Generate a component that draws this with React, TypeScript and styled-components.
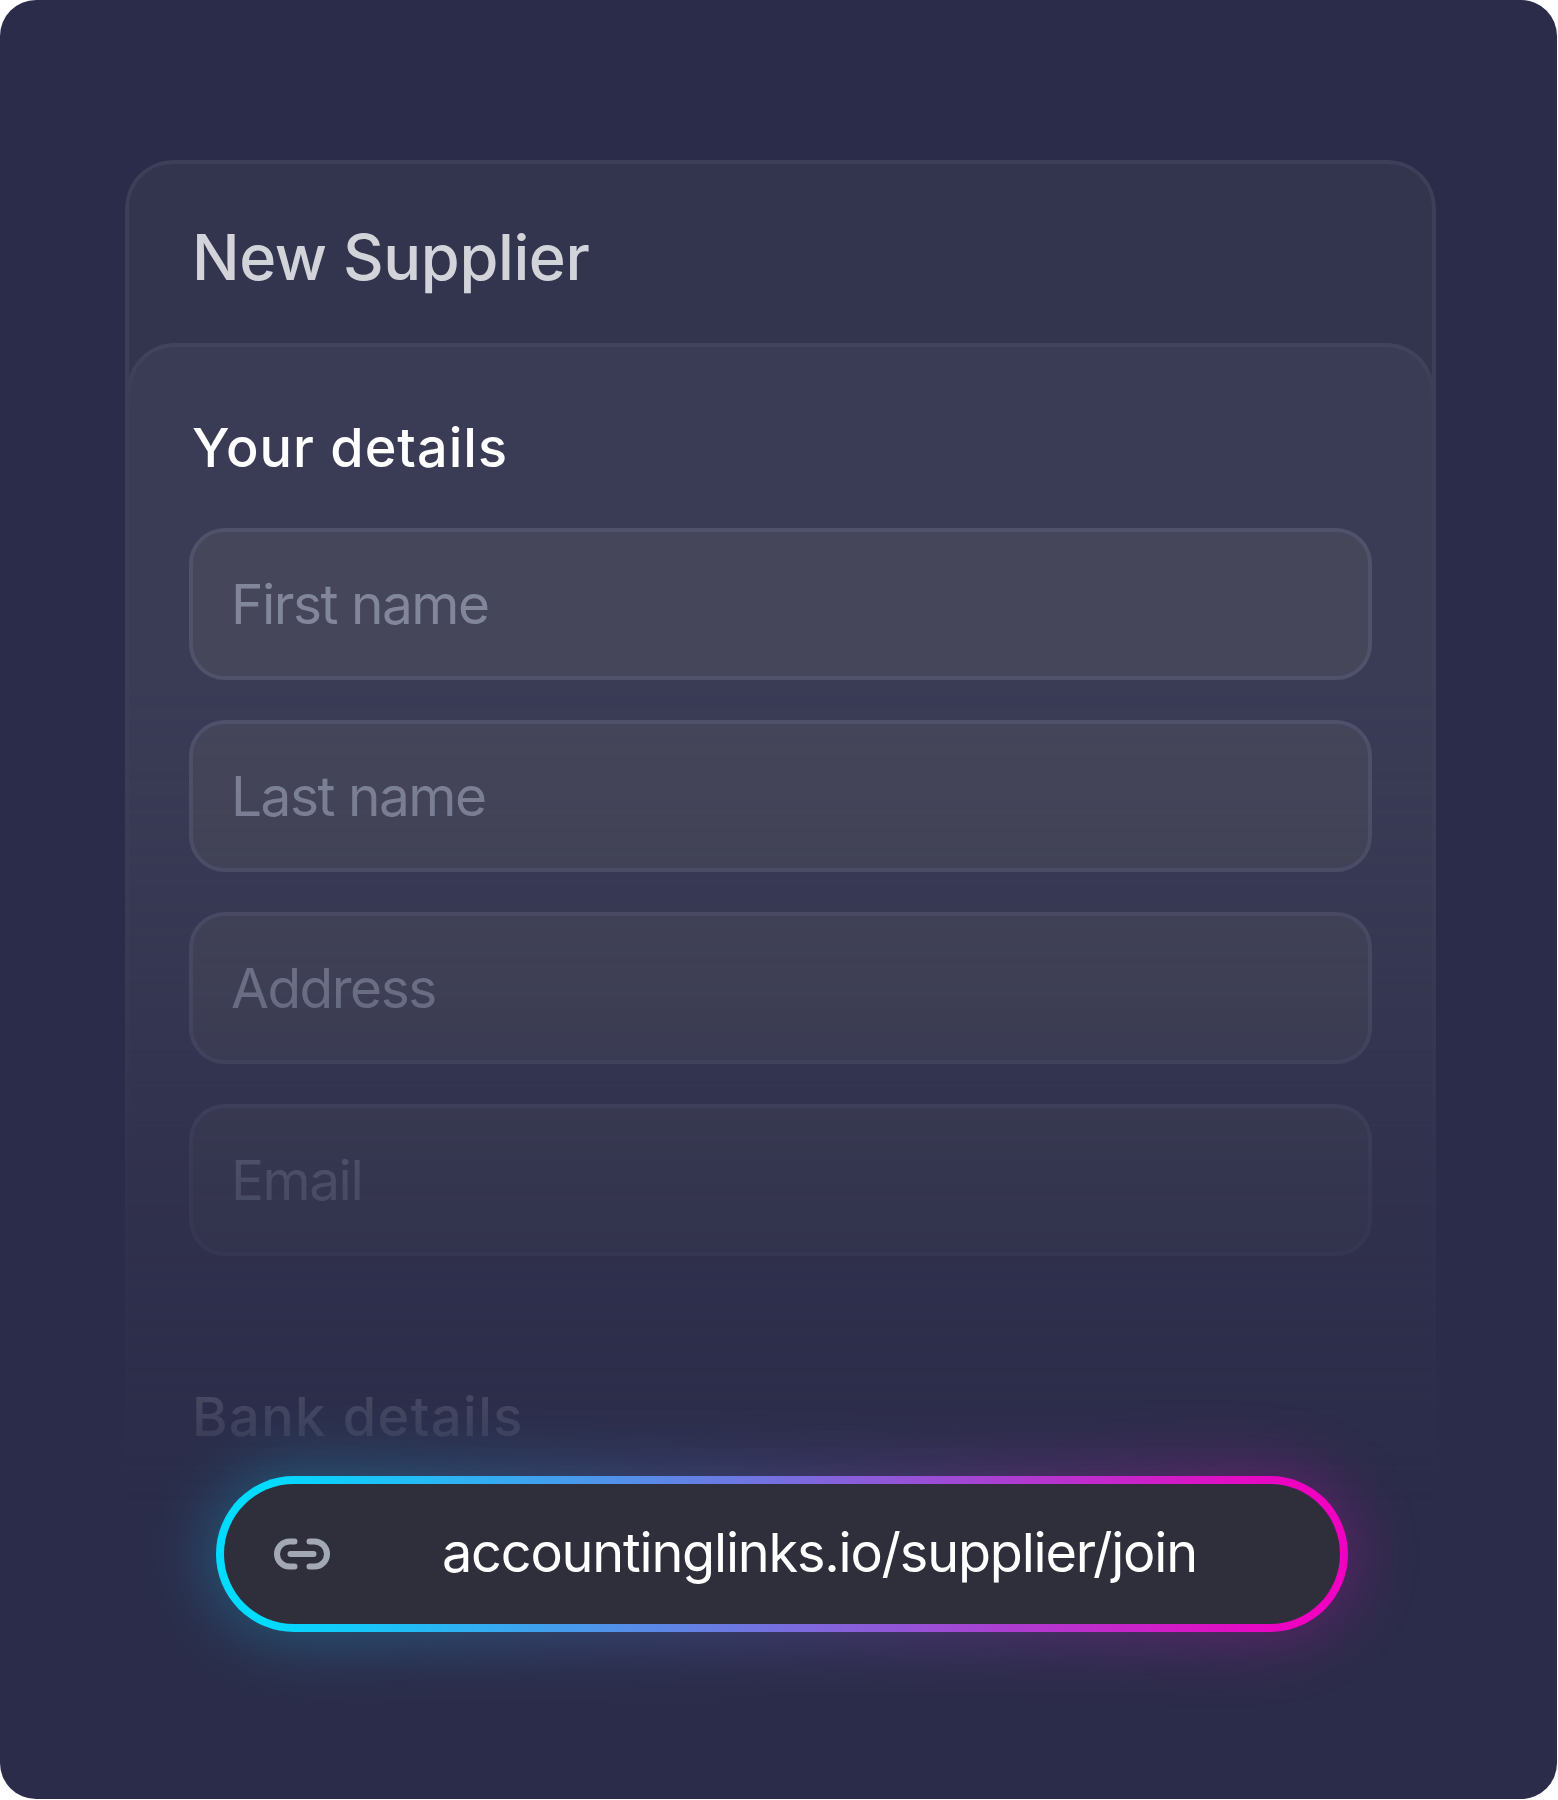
import React from "react";
import styled, { createGlobalStyle } from "styled-components";

const GlobalStyle = createGlobalStyle`
  html, body {
    margin: 0;
    padding: 0;
    background: #ffffff;
  }
  * {
    box-sizing: border-box;
  }
`;

const Panel = styled.div`
  position: relative;
  width: 1557px;
  height: 1799px;
  padding-top: 160px;
  border-radius: 36px;
  background: #2b2c49;
  font-family: Inter, "Liberation Sans", sans-serif;
  overflow: hidden;
`;

const fade = `linear-gradient(
    to bottom,
    #000 0,
    #000 520px,
    rgba(0, 0, 0, 0.92) 640px,
    rgba(0, 0, 0, 0.73) 830px,
    rgba(0, 0, 0, 0.36) 1020px,
    rgba(0, 0, 0, 0.11) 1257px,
    transparent 1340px
  )`;

const Card = styled.div`
  width: 1311px;
  height: 1340px;
  margin-left: 125px;
  border: 4px solid #3d3e57;
  border-bottom: 0;
  border-radius: 48px 48px 0 0;
  background: #33344e;
  overflow: hidden;
  -webkit-mask-image: ${fade};
  mask-image: ${fade};
`;

const CardTitle = styled.h1`
  height: 179px;
  margin: 0;
  padding: 50px 0 0 63px;
  font-size: 63px;
  line-height: 86px;
  font-weight: 500;
  letter-spacing: -0.4px;
  color: #d3d3da;
`;

const Section = styled.div`
  height: 1200px;
  margin: 0 -2px;
  padding: 0 58px;
  border: 4px solid transparent;
  border-radius: 48px 48px 0 0;
  background: linear-gradient(#3a3b55, #3a3b55) padding-box,
    linear-gradient(#43445c 0, #3a3b55 60px) border-box;
`;

const SectionTitle = styled.h2<{ $top: number; $spacing: number }>`
  margin: 0;
  padding-top: ${(p) => p.$top}px;
  padding-left: 3px;
  font-size: 54px;
  line-height: 64px;
  font-weight: 500;
  letter-spacing: ${(p) => p.$spacing}px;
  color: #ffffff;
`;

const Fields = styled.div`
  display: flex;
  flex-direction: column;
  gap: 40px;
  margin-top: 48px;
`;

const Field = styled.div`
  display: flex;
  align-items: center;
  height: 152px;
  padding-left: 38px;
  border: 4px solid #50516a;
  border-radius: 36px;
  background: #454659;
  font-size: 55px;
  font-weight: 400;
  letter-spacing: -1.5px;
  color: #82869a;
`;

const LinkPill = styled.div`
  position: absolute;
  left: 216px;
  top: 1476px;
  display: flex;
  align-items: center;
  gap: 110px;
  width: 1132px;
  height: 156px;
  padding: 0 0 4px 48px;
  border: 8px solid transparent;
  border-radius: 78px;
  background: linear-gradient(#2f2f3b, #2f2f3b) padding-box,
    linear-gradient(90deg, #00dcff 0%, #00dcff 4%, #f000c0 96%, #f000c0 100%) border-box;
  font-size: 54px;
  font-weight: 400;
  letter-spacing: -1.2px;
  color: #ffffff;
`;

const Glow = styled.div`
  position: absolute;
  left: 216px;
  top: 1476px;
  width: 1132px;
  height: 156px;
  border-radius: 78px;
  background: linear-gradient(90deg, #00dcff, #f000c0);
  opacity: 0.34;
  filter: blur(36px);
`;

const LinkIcon = styled.svg`
  flex: none;
  width: 60px;
  height: 60px;
  margin-top: 4px;
  fill: none;
  stroke: #a3a8b5;
  stroke-width: 2.4;
  stroke-linecap: round;
  stroke-linejoin: round;
`;

export default function App() {
  return (
    <>
      <GlobalStyle />
      <Panel>
        <Card>
          <CardTitle>New Supplier</CardTitle>
          <Section>
            <SectionTitle $top={69} $spacing={1}>
              Your details
            </SectionTitle>
            <Fields>
              <Field>First name</Field>
              <Field>Last name</Field>
              <Field>Address</Field>
              <Field>Email</Field>
            </Fields>
            <SectionTitle $top={129} $spacing={1.5}>
              Bank details
            </SectionTitle>
          </Section>
        </Card>
        <Glow />
        <LinkPill>
          <LinkIcon viewBox="0 0 24 24">
            <path d="M9 17H7A5 5 0 0 1 7 7h2" />
            <path d="M15 7h2a5 5 0 1 1 0 10h-2" />
            <line x1="7.4" y1="12" x2="16.6" y2="12" />
          </LinkIcon>
          accountinglinks.io/supplier/join
        </LinkPill>
      </Panel>
    </>
  );
}
